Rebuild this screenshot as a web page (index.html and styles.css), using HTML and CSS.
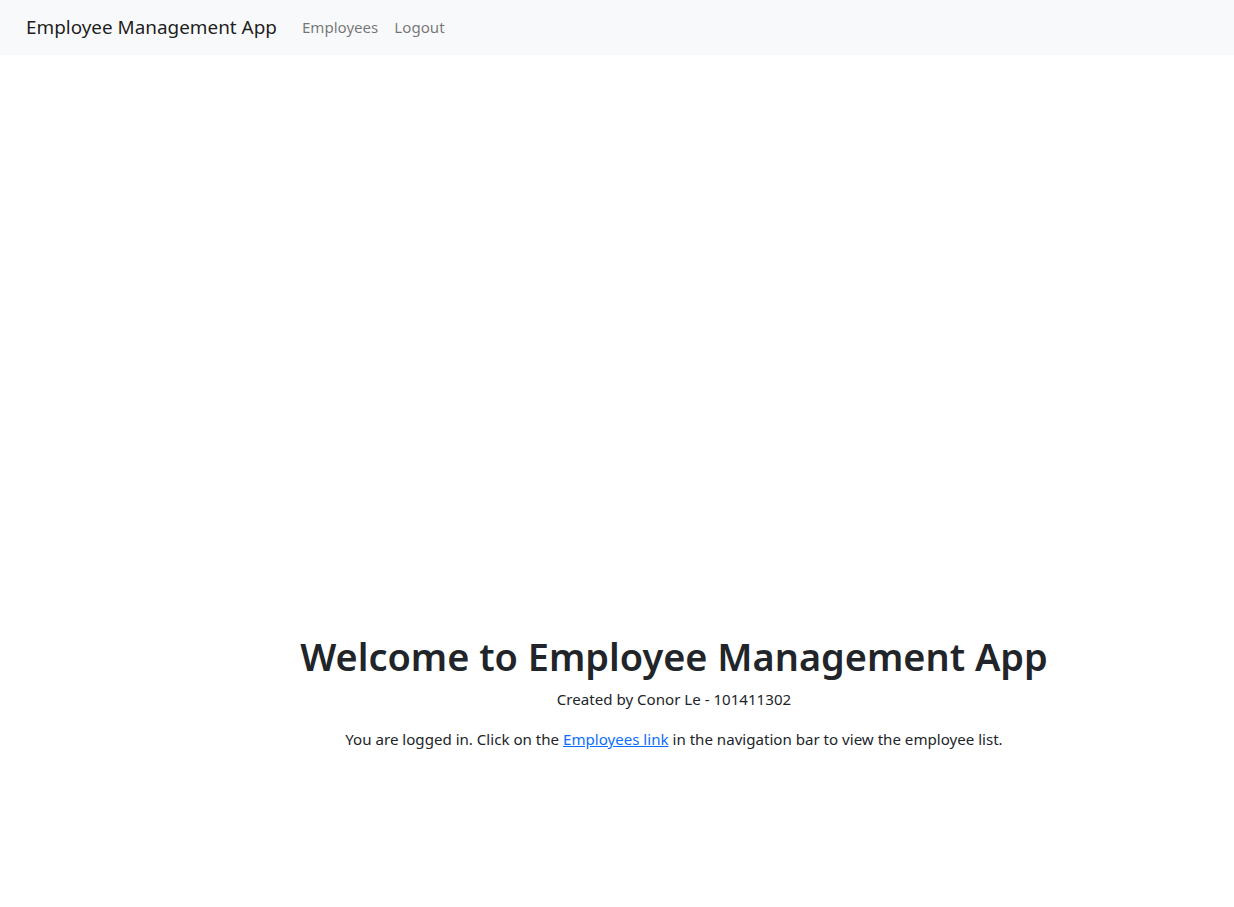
FILE: index.html
```html
<!DOCTYPE html>
<html lang="en">
<head>
<meta charset="utf-8">
<title>Employee Management App</title>
<link rel="stylesheet" href="styles.css">
</head>
<body>
<nav class="navbar">
  <a class="brand" href="#">Employee Management App</a>
  <ul class="nav-links">
    <li><a class="nav-link" href="#">Employees</a></li>
    <li><a class="nav-link" href="#">Logout</a></li>
  </ul>
</nav>
<main class="main">
  <section class="welcome">
    <h1 class="title">Welcome to Employee Management App</h1>
    <p class="credit">Created by Conor Le - 101411302</p>
    <p class="info">You are logged in. Click on the <a class="link" href="#">Employees link</a> in the navigation bar to view the employee list.</p>
  </section>
</main>
</body>
</html>
```
FILE: styles.css
```css
* { box-sizing: border-box; }
html, body { margin: 0; padding: 0; }
body {
  font-family: "Noto Sans", "Open Sans", sans-serif;
  font-size: 15.1px;
  line-height: 24px;
  color: #212529;
  background: #fff;
}
.navbar {
  display: flex;
  align-items: center;
  height: 55px;
  background: #f8f9fa;
  padding: 0 26px 1px;
}
.brand {
  font-size: 18.9px;
  color: rgba(0,0,0,.9);
  text-decoration: none;
  margin-right: 17px;
  line-height: 30px;
}
.nav-links {
  display: flex;
  list-style: none;
  margin: 0;
  padding: 0;
}
.nav-link {
  display: block;
  padding: 8px;
  color: rgba(0,0,0,.55);
  text-decoration: none;
}
.main {
  padding-left: 114px;
  padding-top: 577px;
}
.welcome {
  text-align: center;
}
.title {
  font-size: 37.9px;
  font-weight: 600;
  line-height: 48px;
  margin: 0 0 7px;
}
.credit { margin: 0 0 16px; }
.info { margin: 0 0 16px; }
.link { color: #0d6efd; text-decoration: underline; }
```
